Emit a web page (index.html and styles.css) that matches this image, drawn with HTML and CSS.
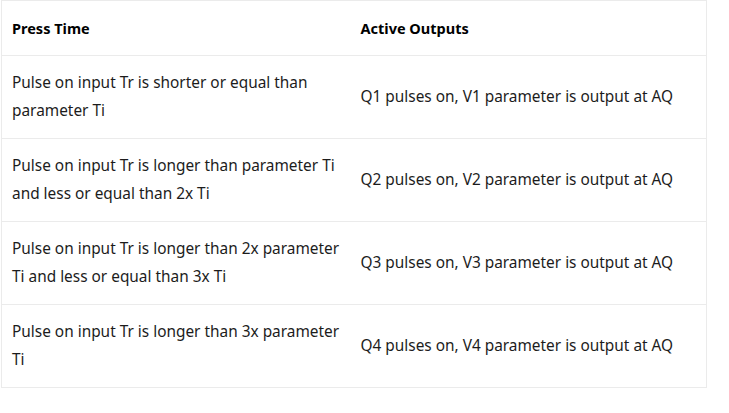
FILE: index.html
```html
<!DOCTYPE html>
<html>
<head>
<meta charset="utf-8">
<link rel="stylesheet" href="styles.css">
</head>
<body>
<div class="wrap">
<table class="grid">
<colgroup><col class="c1"><col class="c2"></colgroup>
<thead>
<tr><th>Press Time</th><th>Active Outputs</th></tr>
</thead>
<tbody>
<tr><td>Pulse on input Tr is shorter or equal than parameter Ti</td><td>Q1 pulses on, V1 parameter is output at AQ</td></tr>
<tr><td>Pulse on input Tr is longer than parameter Ti and less or equal than 2x Ti</td><td>Q2 pulses on, V2 parameter is output at AQ</td></tr>
<tr><td>Pulse on input Tr is longer than 2x parameter Ti and less or equal than 3x Ti</td><td>Q3 pulses on, V3 parameter is output at AQ</td></tr>
<tr><td>Pulse on input Tr is longer than 3x parameter Ti</td><td>Q4 pulses on, V4 parameter is output at AQ</td></tr>
</tbody>
</table>
</div>
</body>
</html>
```
FILE: styles.css
```css
html, body { margin: 0; padding: 0; background: #fff; }
.wrap { padding-left: 1px; }
.grid {
  width: 706px;
  border-collapse: collapse;
  table-layout: fixed;
  font-family: "Noto Sans", sans-serif;
  font-size: 15.4px;
  color: #1c1c1c;
  border: 1px solid #ebebeb;
}
.c1 { width: 349px; }
.grid th, .grid td {
  text-align: left;
  vertical-align: middle;
  padding: 13px 10px;
  line-height: 28px;
  border-bottom: 1px solid #ebebeb;
}
.grid th { font-weight: 700; font-size: 14.5px; color: #000; }
```
